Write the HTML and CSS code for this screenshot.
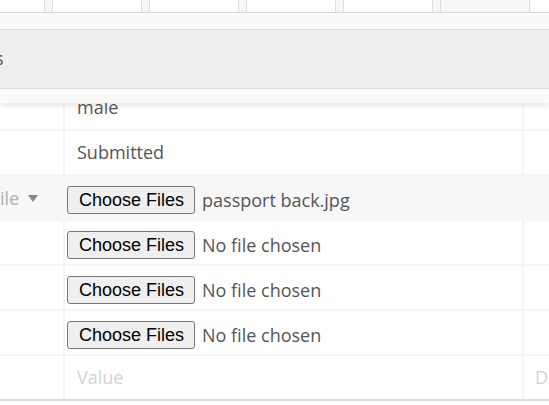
FILE: index.html
```html
<!DOCTYPE html>
<html>
<head>
<meta charset="utf-8">
<link rel="stylesheet" href="styles.css">
</head>
<body>
<div class="overlay">
  <div class="strip">
    <div class="box box-a"></div>
    <div class="box"></div>
    <div class="box"></div>
    <div class="box"></div>
    <div class="box"></div>
    <div class="box box-grey"></div>
    <div class="box box-g"></div>
  </div>
  <div class="band"></div>
  <div class="panel"><span class="cut">s</span></div>
  <div class="band band-low"></div>
</div>

<div class="table">
  <div class="row"><div class="c1"></div><div class="c2">male</div><div class="c3"></div></div>
  <div class="row"><div class="c1"></div><div class="c2">Submitted</div><div class="c3"></div></div>
  <div class="row row-grey">
    <div class="c1 label">ile<span class="caret"></span></div>
    <div class="c2 file"><button class="file-btn">Choose Files</button><span class="fname">passport back.jpg</span></div>
    <div class="c3"></div>
  </div>
  <div class="row"><div class="c1"></div><div class="c2 file"><button class="file-btn">Choose Files</button><span class="fname">No file chosen</span></div><div class="c3"></div></div>
  <div class="row"><div class="c1"></div><div class="c2 file"><button class="file-btn">Choose Files</button><span class="fname">No file chosen</span></div><div class="c3"></div></div>
  <div class="row"><div class="c1"></div><div class="c2 file"><button class="file-btn">Choose Files</button><span class="fname">No file chosen</span></div><div class="c3"></div></div>
  <div class="row row-last"><div class="c1"></div><div class="c2 ph">Value</div><div class="c3 ph">Description</div></div>
</div>
</body>
</html>
```

FILE: styles.css
```css
html, body {
  margin: 0;
  padding: 0;
  background: #ffffff;
  overflow: hidden;
}
body {
  width: 549px;
  height: 405px;
  position: relative;
  font-family: "Open Sans", "Liberation Sans", sans-serif;
  font-size: 18px;
  color: #555555;
}

/* overlay header */
.overlay {
  position: absolute;
  top: 0;
  left: 0;
  right: 0;
  z-index: 2;
  background: #fafafa;
  box-shadow: 0 3px 5px rgba(0, 0, 0, 0.09);
}
.strip {
  display: flex;
  gap: 7px;
  height: 12px;
  background: #f6f6f6;
  border-bottom: 1px solid #d6d6d6;
}
.box {
  width: 88px;
  background: #ffffff;
  border-left: 1px solid #dddddd;
  border-right: 1px solid #dddddd;
  flex: none;
}
.box-a {
  width: 44px;
  border-left: none;
}
.box-grey {
  background: #f7f7f7;
}
.box-g {
  width: 19px;
  margin-left: -6px;
  border-left: none;
}
.band {
  height: 16px;
  background: #fafafa;
  border-bottom: 1px solid #dddddd;
}
.band-low {
  height: 14px;
  border-bottom: none;
}
.panel {
  height: 58px;
  background: #efefef;
  border-bottom: 1px solid #dddddd;
  display: flex;
  align-items: center;
  overflow: hidden;
}
.cut {
  margin-left: -5px;
  padding-bottom: 2px;
}

/* table */
.table {
  padding-top: 86px;
}
.row {
  display: grid;
  grid-template-columns: 63px 1fr 25px;
  height: 43px;
  border-bottom: 2px solid #f4f4f4;
}
.c1, .c2, .c3 {
  display: flex;
  align-items: center;
  white-space: nowrap;
  overflow: hidden;
}
.c2 {
  border-left: 2px solid #f4f4f4;
  border-right: 2px solid #f4f4f4;
  padding-left: 12px;
  padding-bottom: 2px;
}
.c3 {
  padding-left: 11px;
  padding-bottom: 2px;
}
.row-grey {
  background: #f7f7f7;
  border-bottom-color: #f7f7f7;
}
.row-grey .c2 {
  border-color: #f7f7f7;
}
.row-last {
  border-bottom-color: #dddddd;
}
.c2.file {
  padding-left: 2px;
  padding-top: 4px;
  padding-bottom: 0;
}
.file-btn {
  font-family: "Liberation Sans", Arial, sans-serif;
  font-size: 18px;
  line-height: 20px;
  color: #000000;
  background: #efefef;
  border: 1px solid #767676;
  border-radius: 3px;
  padding: 3px 10px 3px 11px;
  margin: 0 7px 0 0;
}
.fname {
  color: #555555;
}
.label {
  color: #b0b0b0;
  padding-top: 1px;
}
.caret {
  display: inline-block;
  width: 0;
  height: 0;
  border-left: 5px solid transparent;
  border-right: 5px solid transparent;
  border-top: 7px solid #888888;
  margin-left: 9px;
  margin-top: 1px;
}
.ph {
  color: #d2d2d2;
}
```
